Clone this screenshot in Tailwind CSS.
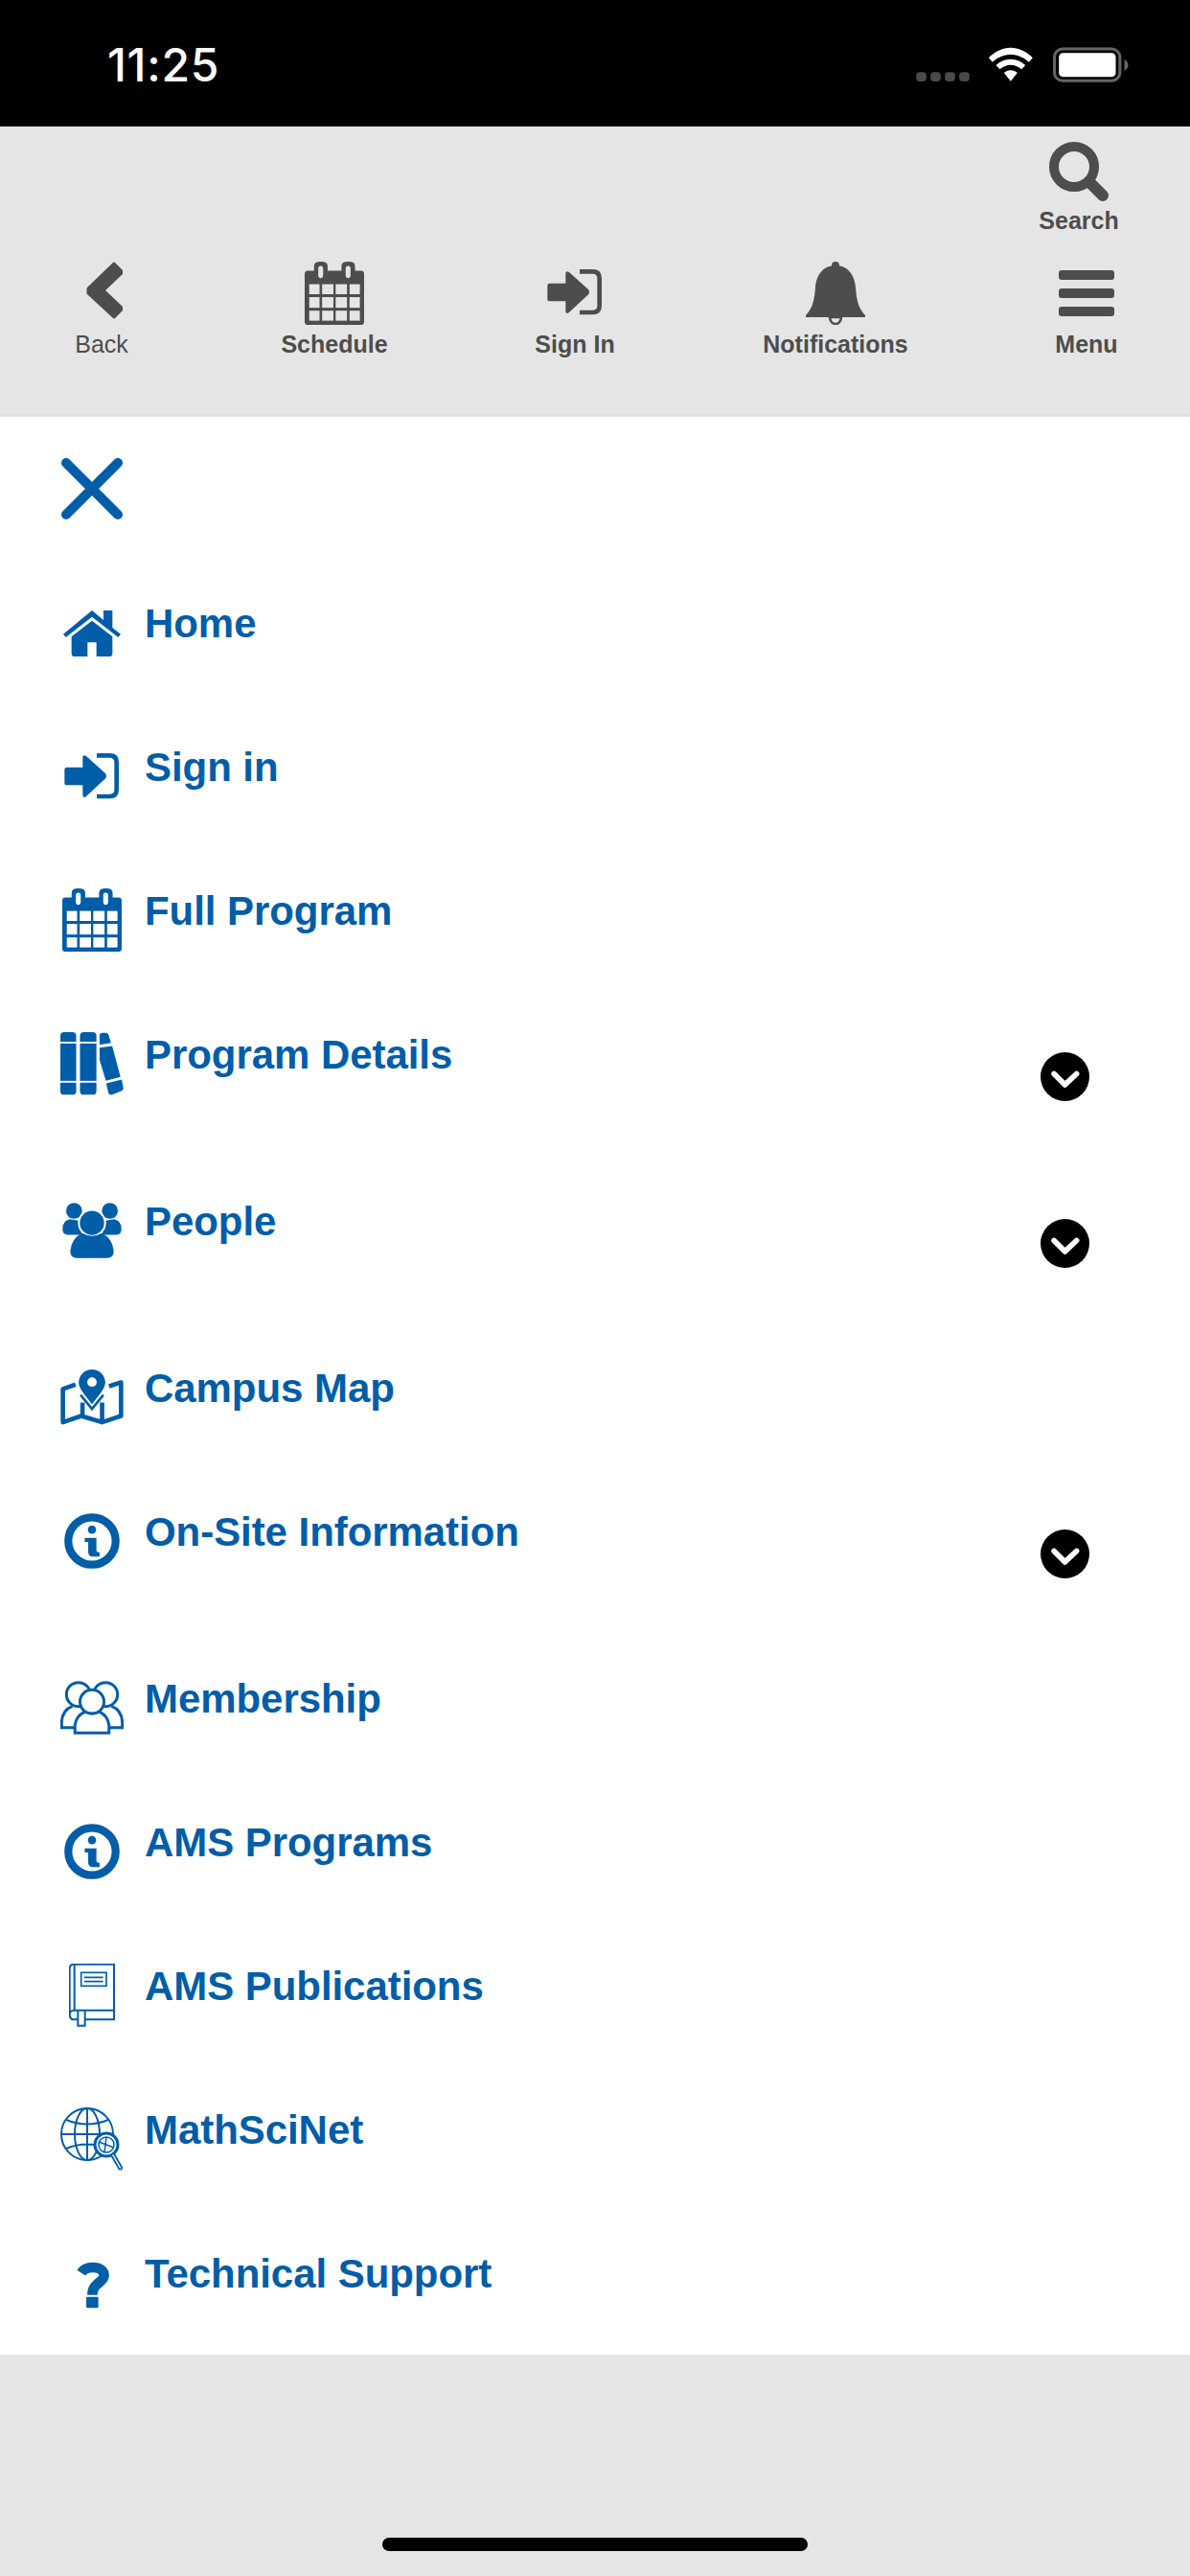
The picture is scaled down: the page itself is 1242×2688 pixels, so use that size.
<!DOCTYPE html>
<html lang="en">
<head>
<meta charset="utf-8">
<title>Menu</title>
<script src="https://cdn.jsdelivr.net/npm/@tailwindcss/browser@4"></script>
</head>
<body class="m-0 bg-white font-['Liberation_Sans',Arial,sans-serif]">
<div class="w-[1242px] h-[2688px] flex flex-col overflow-hidden bg-[#e5e5e5]">

  <!-- status bar -->
  <div class="h-[132px] bg-black flex items-center justify-between pl-[112px] pr-[64px] shrink-0">
    <span class="font-['Inter',sans-serif] font-medium text-[48px] leading-[50px] text-white tracking-[0.7px] mt-[4px]">11:25</span>
    <svg width="222" height="40" viewBox="50 50 665 120" class="mt-[2px]">
      <g fill="#4a4a4a"><rect x="50" y="135" width="32" height="29" rx="11"/><rect x="95" y="135" width="32" height="29" rx="11"/><rect x="140" y="135" width="32" height="29" rx="11"/><rect x="185" y="135" width="32" height="29" rx="11"/></g>
      <g fill="#fff">
        <path d="M277 90C320 48 372 48 415 90L403 103C368 72 324 72 289 103Z"/>
        <path d="M300 113C328 88 364 88 392 113L380 126C358 108 334 108 312 126Z"/>
        <path d="M325 137C338 126 354 126 367 137L346 163Z"/>
      </g>
      <rect x="483" y="62" width="205" height="100" rx="26" fill="none" stroke="#666" stroke-width="9"/>
      <rect x="497" y="75" width="178" height="75" rx="13" fill="#fff"/>
      <path d="M702 95Q714 103 714 113Q714 123 702 131Z" fill="#666"/>
    </svg>
  </div>

  <!-- toolbar -->
  <div class="h-[303px] shrink-0 bg-[#e5e5e5] border-b-[3px] border-[#dee2e6] text-[#4d4d4d] text-[25px] leading-[30px] font-bold">
    <div class="flex justify-end pr-[74px] pt-[16px]">
      <div class="flex flex-col items-center w-[84px]">
        <svg width="62" height="62" viewBox="1094 148 62 62" fill="none" stroke="#4d4d4d">
          <circle cx="1120" cy="174" r="21" stroke-width="10"/>
          <path d="M1137 191L1150 204" stroke-width="12" stroke-linecap="round"/>
        </svg>
        <span class="mt-[5px]">Search</span>
      </div>
    </div>
    <div class="grid grid-cols-[132px_354px_148px_396px_128px] pl-[40px] mt-[28px]">
      <div class="flex flex-col items-center font-normal">
        <svg width="44" height="66" viewBox="84 273 44 66"><path d="M119 275L128 284L108 303L128 322L119 331L92 306V301Z" fill="#4d4d4d" stroke="#4d4d4d" stroke-width="3" stroke-linejoin="round"/></svg>
        <span class="mt-[5px]">Back</span>
      </div>
      <div class="flex flex-col items-center">
        <svg width="62" height="66" viewBox="76 82 184 196">
          <path d="M86 110H105V95Q105 82 126 82Q147 82 147 95V110H190V95Q190 82 211 82Q232 82 232 95V110H250Q260 110 260 120V268Q260 278 250 278H86Q76 278 76 268V120Q76 110 86 110Z" fill="#4d4d4d"/>
          <g fill="#e5e5e5"><rect x="118" y="95" width="15" height="38" rx="7"/><rect x="203" y="95" width="15" height="38" rx="7"/>
          <rect x="90" y="152" width="32" height="31"/><rect x="130" y="152" width="35" height="31"/><rect x="172" y="152" width="35" height="31"/><rect x="215" y="152" width="32" height="31"/>
          <rect x="90" y="192" width="32" height="33"/><rect x="130" y="192" width="35" height="33"/><rect x="172" y="192" width="35" height="33"/><rect x="215" y="192" width="32" height="33"/>
          <rect x="90" y="234" width="32" height="31"/><rect x="130" y="234" width="35" height="31"/><rect x="172" y="234" width="35" height="31"/><rect x="215" y="234" width="32" height="31"/></g>
        </svg>
        <span class="mt-[5px]">Schedule</span>
      </div>
      <div class="flex flex-col items-center">
        <svg width="58" height="66" viewBox="82 984 174 198">
          <path d="M140 1020Q140 1012 150 1016L212 1072Q216 1080 212 1086L150 1144Q140 1150 140 1138V1108H90Q83 1108 83 1100V1060Q83 1052 90 1052H140Z" fill="#4d4d4d"/>
          <path d="M184 1015H225Q246 1015 246 1036V1122Q246 1143 225 1143H184" fill="none" stroke="#4d4d4d" stroke-width="14"/>
        </svg>
        <span class="mt-[5px]">Sign In</span>
      </div>
      <div class="flex flex-col items-center">
        <svg width="62" height="66" viewBox="842 273 62 66">
          <circle cx="873" cy="277" r="4" fill="#4d4d4d"/>
          <path d="M873 277C886 277 893 287 894 300C895 313 897 322 904 329V331H842V329C849 322 851 313 852 300C853 287 860 277 873 277Z" fill="#4d4d4d"/>
          <path d="M867 331A6 7 0 0 0 879 331Z" fill="none" stroke="#4d4d4d" stroke-width="2.5"/>
        </svg>
        <span class="mt-[5px]">Notifications</span>
      </div>
      <div class="flex flex-col items-center">
        <svg width="58" height="66" viewBox="1105 273 58 66" fill="#4d4d4d">
          <rect x="1105" y="282" width="58" height="10" rx="3"/><rect x="1105" y="301" width="58" height="10" rx="3"/><rect x="1105" y="320" width="58" height="10" rx="3"/>
        </svg>
        <span class="mt-[5px]">Menu</span>
      </div>
    </div>
  </div>

  <!-- menu -->
  <div class="bg-white shrink-0 text-[#005da8] text-[42px] leading-[48px] font-bold tracking-[-0.06px]">
    <div class="h-[150px] pl-[63px] pt-[42px]">
      <svg width="66" height="66" viewBox="0 0 66 66"><path d="M6 6L60 60M60 6L6 60" stroke="#005da8" stroke-width="10" stroke-linecap="round"/></svg>
    </div>

    <div class="flex h-[150px] pl-[63px]">
      <div class="w-[66px] h-full flex items-center justify-center shrink-0">
        <svg width="60" height="49" viewBox="78 555 180 147" fill="#005da8">
          <path d="M78 632L168 558L204 588V558H232V612L258 632L250 642L168 578L86 642Z"/>
          <path d="M104 640L168 590L232 640V692Q232 702 222 702H182V658H154V702H114Q104 702 104 692Z"/>
        </svg>
      </div>
      <span class="ml-[22px] pt-[42px]">Home</span>
    </div>

    <div class="flex h-[150px] pl-[63px]">
      <div class="w-[66px] h-full flex items-center justify-center shrink-0">
        <svg width="58" height="48" viewBox="82 1008 174 144">
          <path d="M140 1020Q140 1012 150 1016L212 1072Q216 1080 212 1086L150 1144Q140 1150 140 1138V1108H90Q83 1108 83 1100V1060Q83 1052 90 1052H140Z" fill="#005da8"/>
          <path d="M184 1015H225Q246 1015 246 1036V1122Q246 1143 225 1143H184" fill="none" stroke="#005da8" stroke-width="14"/>
        </svg>
      </div>
      <span class="ml-[22px] pt-[42px]">Sign in</span>
    </div>

    <div class="flex h-[150px] pl-[63px]">
      <div class="w-[66px] h-full flex items-center justify-center shrink-0">
        <svg width="62" height="66" viewBox="76 82 184 196">
          <path d="M86 110H105V95Q105 82 126 82Q147 82 147 95V110H190V95Q190 82 211 82Q232 82 232 95V110H250Q260 110 260 120V268Q260 278 250 278H86Q76 278 76 268V120Q76 110 86 110Z" fill="#005da8"/>
          <g fill="#fff"><rect x="118" y="95" width="15" height="38" rx="7"/><rect x="203" y="95" width="15" height="38" rx="7"/>
          <rect x="90" y="152" width="32" height="31"/><rect x="130" y="152" width="35" height="31"/><rect x="172" y="152" width="35" height="31"/><rect x="215" y="152" width="32" height="31"/>
          <rect x="90" y="192" width="32" height="33"/><rect x="130" y="192" width="35" height="33"/><rect x="172" y="192" width="35" height="33"/><rect x="215" y="192" width="32" height="33"/>
          <rect x="90" y="234" width="32" height="31"/><rect x="130" y="234" width="35" height="31"/><rect x="172" y="234" width="35" height="31"/><rect x="215" y="234" width="32" height="31"/></g>
        </svg>
      </div>
      <span class="ml-[22px] pt-[42px]">Full Program</span>
    </div>

    <div class="flex h-[174px] pl-[63px] pr-[105px]">
      <div class="w-[66px] h-[150px] flex items-center justify-center shrink-0">
        <svg width="66" height="66" viewBox="68 530 200 200" fill="#005da8">
          <path d="M68 560V542Q68 530 80 530H106Q118 530 118 542V560Z"/><rect x="68" y="566" width="50" height="118"/><path d="M68 690H118V716Q118 728 106 728H80Q68 728 68 716Z"/>
          <path d="M130 560V542Q130 530 142 530H170Q182 530 182 542V560Z"/><rect x="130" y="566" width="52" height="118"/><path d="M130 690H182V716Q182 728 170 728H142Q130 728 130 716Z"/>
          <path d="M192 570V540Q192 532 202 532H212Q219 532 221 540L228 564Z"/><path d="M192 579L232 574L258 672L212 684L192 618Z"/><path d="M213 692L262 680L267 706Q268 714 260 716L232 728Q222 730 220 722Z"/>
        </svg>
      </div>
      <span class="ml-[22px] pt-[42px]">Program Details</span>
      <svg class="ml-auto mt-[63px]" width="51" height="51" viewBox="138 85 152 152"><circle cx="214" cy="161" r="76" fill="#000"/><path d="M180 152L214 186L250 152" fill="none" stroke="#fff" stroke-width="17" stroke-linecap="round" stroke-linejoin="round"/></svg>
    </div>

    <div class="flex h-[174px] pl-[63px] pr-[105px]">
      <div class="w-[66px] h-[150px] flex items-center justify-center shrink-0">
        <svg width="62" height="58" viewBox="75 1065 186 173" fill="#005da8">
          <circle cx="112" cy="1090" r="25"/><circle cx="224" cy="1090" r="25"/>
          <path d="M76 1148Q76 1118 100 1116L135 1122V1165H92Q76 1165 76 1148Z"/>
          <path d="M260 1148Q260 1118 236 1116L201 1122V1165H244Q260 1165 260 1148Z"/>
          <circle cx="168" cy="1128" r="41" stroke="#fff" stroke-width="6"/>
          <path d="M100 1216Q104 1175 138 1160Q168 1178 198 1160Q232 1175 236 1216Q236 1238 214 1238H122Q100 1238 100 1216Z"/>
        </svg>
      </div>
      <span class="ml-[22px] pt-[42px]">People</span>
      <svg class="ml-auto mt-[63px]" width="51" height="51" viewBox="138 85 152 152"><circle cx="214" cy="161" r="76" fill="#000"/><path d="M180 152L214 186L250 152" fill="none" stroke="#fff" stroke-width="17" stroke-linecap="round" stroke-linejoin="round"/></svg>
    </div>

    <div class="flex h-[150px] pl-[63px]">
      <div class="w-[66px] h-full flex items-center justify-center shrink-0">
        <svg width="66" height="60" viewBox="68 383 200 180">
          <path d="M116 433L76 447V552L134 532L200 552L260 532V426L222 438M138 490V532M200 490V552" fill="none" stroke="#005da8" stroke-width="14" stroke-linejoin="round"/>
          <path d="M132 466L168 510L204 466" fill="none" stroke="#005da8" stroke-width="8"/>
          <path fill-rule="evenodd" d="M168 496C160 482 126 450 126 427A42 42 0 0 1 210 427C210 450 176 482 168 496ZM168 410A15 15 0 1 0 168 440A15 15 0 1 0 168 410Z" fill="#005da8"/>
        </svg>
      </div>
      <span class="ml-[22px] pt-[42px]">Campus Map</span>
    </div>

    <div class="flex h-[174px] pl-[63px] pr-[105px]">
      <div class="w-[66px] h-[150px] flex items-center justify-center shrink-0">
        <svg width="58" height="58" viewBox="80 836 176 176" fill="#005da8">
          <circle cx="168" cy="924" r="75" fill="none" stroke="#005da8" stroke-width="25"/>
          <circle cx="168" cy="888" r="13"/>
          <path d="M145 914H182V952Q182 960 192 960V973H170Q156 973 156 958V927H145Z"/>
        </svg>
      </div>
      <span class="ml-[22px] pt-[42px]">On-Site Information</span>
      <svg class="ml-auto mt-[63px]" width="51" height="51" viewBox="138 85 152 152"><circle cx="214" cy="161" r="76" fill="#000"/><path d="M180 152L214 186L250 152" fill="none" stroke="#fff" stroke-width="17" stroke-linecap="round" stroke-linejoin="round"/></svg>
    </div>

    <div class="flex h-[150px] pl-[63px]">
      <div class="w-[66px] h-full flex items-center justify-center shrink-0">
        <svg width="66" height="56" viewBox="68 160 200 170" fill="none" stroke="#005da8" stroke-width="9">
          <circle cx="125" cy="203" r="38"/><circle cx="211" cy="203" r="38"/>
          <path d="M106 240Q74 252 72 290V308H115M230 240Q262 252 264 290V308H221"/>
          <circle cx="168" cy="226" r="38" fill="#fff"/>
          <path d="M114 325V300Q118 270 145 258Q168 270 192 258Q218 270 222 300V325Z" fill="#fff"/>
        </svg>
      </div>
      <span class="ml-[22px] pt-[42px]">Membership</span>
    </div>

    <div class="flex h-[150px] pl-[63px]">
      <div class="w-[66px] h-full flex items-center justify-center shrink-0">
        <svg width="58" height="58" viewBox="80 836 176 176" fill="#005da8">
          <circle cx="168" cy="924" r="75" fill="none" stroke="#005da8" stroke-width="25"/>
          <circle cx="168" cy="888" r="13"/>
          <path d="M145 914H182V952Q182 960 192 960V973H170Q156 973 156 958V927H145Z"/>
        </svg>
      </div>
      <span class="ml-[22px] pt-[42px]">AMS Programs</span>
    </div>

    <div class="flex h-[150px] pl-[63px]">
      <div class="w-[66px] h-full flex items-center justify-center shrink-0">
        <svg width="48" height="66" viewBox="97 148 144 198" fill="none" stroke="#005da8" stroke-width="5">
          <path d="M147 323H238V150H112Q99 150 99 165V305Q99 323 112 323H125" stroke-width="6"/>
          <path d="M114 150V294H238M99 306Q100 294 114 294" stroke-width="6"/>
          <path d="M125 296V342H147V296" stroke-width="6"/>
          <rect x="135" y="176" width="79" height="42"/>
          <path d="M145 191H204M145 204H204"/>
        </svg>
      </div>
      <span class="ml-[22px] pt-[42px]">AMS Publications</span>
    </div>

    <div class="flex h-[150px] pl-[63px]">
      <div class="w-[66px] h-full flex items-center justify-center shrink-0">
        <svg width="66" height="66" viewBox="63 2198 66 66" fill="none" stroke="#005da8" stroke-width="2">
          <circle cx="91" cy="2226" r="27"/>
          <ellipse cx="91" cy="2226" rx="13" ry="27"/>
          <path d="M91 2199V2253M64 2226H118M69 2211Q91 2220 113 2211M69 2241Q91 2232 113 2241"/>
          <circle cx="111" cy="2237" r="12" fill="#fff" stroke-width="3"/>
          <circle cx="111" cy="2237" r="8" stroke-width="1.5"/>
          <path d="M103 2234L119 2240M111 2229L109 2245" stroke-width="1.5"/>
          <path d="M118 2248L125.500 2261" stroke-width="5" stroke-linecap="round"/>
          <path d="M118 2248L125.500 2261" stroke="#fff" stroke-width="1.500" stroke-linecap="round"/>
        </svg>
      </div>
      <span class="ml-[22px] pt-[42px]">MathSciNet</span>
    </div>

    <div class="flex h-[150px] pl-[63px]">
      <div class="w-[66px] h-[150px] flex items-center justify-center shrink-0">
        <svg class="ml-[2px] mt-[4px]" width="36" height="49" viewBox="120 172 108 148" fill="none">
          <path d="M137 207C145 195 158 190 173 190C195 190 209 200 209 216C209 238 172 238 172 277" stroke="#005da8" stroke-width="32"/>
          <rect x="153" y="283" width="38" height="35" rx="4" fill="#005da8"/>
        </svg>
      </div>
      <span class="ml-[22px] pt-[42px]">Technical Support</span>
    </div>
  </div>

  <!-- home indicator -->
  <div class="flex-1 flex justify-center items-end pb-[26px]">
    <div class="w-[444px] h-[14px] rounded-full bg-black"></div>
  </div>
</div>
</body>
</html>
